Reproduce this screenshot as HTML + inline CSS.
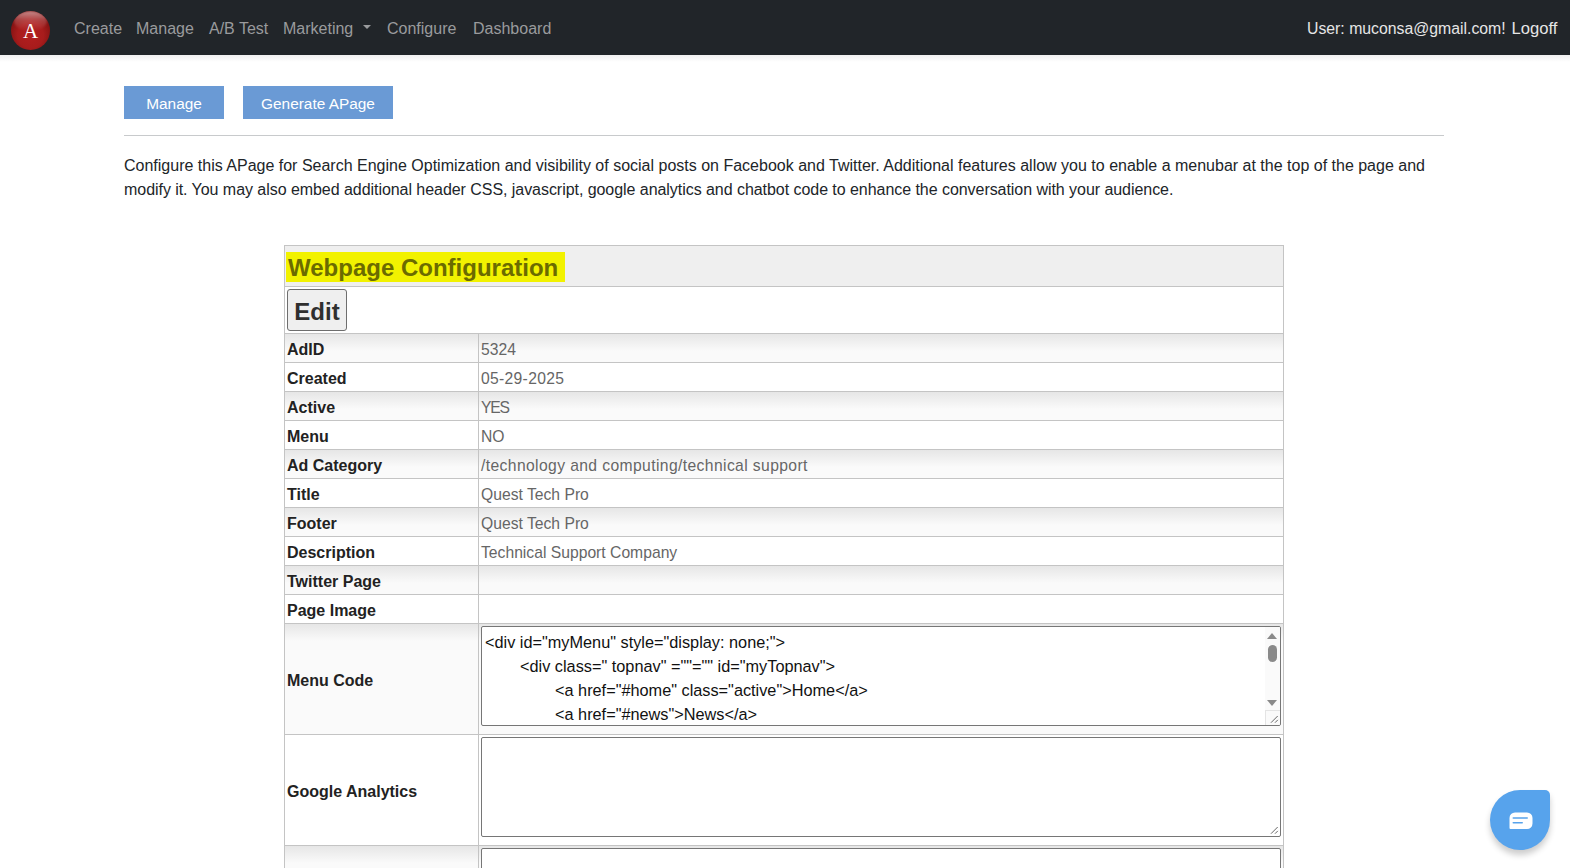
<!DOCTYPE html>
<html><head><meta charset="utf-8">
<style>
*{box-sizing:border-box;}
html,body{margin:0;padding:0;background:#fff;}
body{font-family:"Liberation Sans",sans-serif;color:#212529;width:1570px;height:868px;overflow:hidden;position:relative;}
.nav{position:absolute;left:0;top:0;width:1570px;height:55px;background:#212529;}
.navshadow{position:absolute;left:0;top:55px;width:1570px;height:7px;background:linear-gradient(#f0f0f0,#fff);}
.logo{position:absolute;left:11px;top:11px;width:39px;height:39px;border-radius:50%;
 background:radial-gradient(ellipse 60% 60% at 50% 62%,#b21e1e 0%,#a81c1c 55%,#8a1414 85%,#761010 100%);overflow:hidden;}
.logo:before{content:"";position:absolute;left:3px;top:0px;width:33px;height:20px;border-radius:50%;
 background:linear-gradient(rgba(255,225,225,.6) 0%,rgba(255,200,200,.25) 45%,rgba(255,255,255,0) 100%);filter:blur(1px);}
.logo span{position:absolute;left:0;top:10px;width:39px;text-align:center;font-family:"Liberation Serif",serif;font-size:21px;line-height:21px;color:#fff;}
.nl{position:absolute;top:19px;font-size:16px;line-height:20px;color:#9a9b9d;white-space:nowrap;}
.caret{position:absolute;left:363px;top:25px;width:0;height:0;border-left:4px solid transparent;border-right:4px solid transparent;border-top:4px solid #9a9b9d;}
.user{position:absolute;top:19px;font-size:16px;line-height:20px;color:#e6e6e6;white-space:nowrap;}
.btn{position:absolute;top:86px;height:33px;background:#6a9ad5;color:#fff;font-size:15.4px;line-height:33px;padding-top:1px;text-align:center;}
.hr{position:absolute;left:124px;top:135px;width:1320px;height:1px;background:#c8cacc;}
.para{position:absolute;left:124px;top:154px;width:1330px;font-size:16px;line-height:24px;color:#212529;}

.tbl{position:absolute;left:284px;top:245px;width:1000px;height:700px;}
.hb{position:absolute;left:0;width:1000px;height:1px;background:#c4c4c4;}
.vb{position:absolute;width:1px;background:#c4c4c4;}
.thead{position:absolute;left:1px;top:1px;width:998px;height:40px;background:#efefef;}
.hl{position:absolute;left:1px;top:6px;height:30px;background:#f2f200;color:#6b6b00;font-weight:bold;font-size:24px;line-height:30px;padding-top:1px;white-space:nowrap;padding-left:2px;}
.editbtn{position:absolute;left:3px;top:44px;width:60px;height:42px;border:1px solid #6e6e6e;border-radius:3px;background:#efefef;color:#2f2f2f;font-weight:bold;font-size:24px;line-height:38px;padding-top:3px;text-align:center;}
.row{position:absolute;left:1px;width:998px;}
.odd{background:linear-gradient(#e6e6e6 0px,#fafafa 17px,#fafafa 100%);}
.even{background:#fff;}
.lab{position:absolute;left:2px;top:2px;font-weight:bold;font-size:16px;line-height:28px;color:#222;white-space:nowrap;}
.tal{top:43px;}
.val{position:absolute;left:196px;top:2px;font-size:15.7px;line-height:28px;color:#666;white-space:nowrap;}
.ta{position:absolute;left:197px;width:800px;height:100px;border:1px solid #767676;border-radius:2px;background:#fff;overflow:hidden;}
.code{position:absolute;left:3px;top:2.5px;font-size:16.3px;line-height:24px;color:#111;white-space:nowrap;}
.sb{position:absolute;right:0;top:0;width:15px;height:83px;background:#fafafa;}
.up{position:absolute;left:2px;top:5.5px;width:0;height:0;border-left:5px solid transparent;border-right:5px solid transparent;border-bottom:6.5px solid #8a8a8a;}
.thumb{position:absolute;left:3px;top:18px;width:9px;height:17px;border-radius:4.5px;background:#8a8a8a;}
.dn{position:absolute;left:2px;top:72.5px;width:0;height:0;border-left:5px solid transparent;border-right:5px solid transparent;border-top:6.5px solid #8a8a8a;}
.corner{position:absolute;right:0;bottom:0;width:15px;height:15px;background:#fafafa;border-left:1px solid #e4e4e4;border-top:1px solid #e4e4e4;}
.rs{position:absolute;right:1px;bottom:1px;}

.chat{position:absolute;left:1490px;top:790px;width:60px;height:60px;background:#57a3ec;border-radius:30px 5px 30px 30px;box-shadow:0 5px 6px rgba(0,0,0,.2);}
</style></head><body>
<div class="nav">
 <div class="logo"><span>A</span></div>
 <div class="nl" style="left:74px">Create</div>
 <div class="nl" style="left:136px">Manage</div>
 <div class="nl" style="left:209px">A/B Test</div>
 <div class="nl" style="left:283px">Marketing</div>
 <div class="caret"></div>
 <div class="nl" style="left:387px">Configure</div>
 <div class="nl" style="left:473px">Dashboard</div>
 <div class="user" style="left:1307px;font-size:15.8px">User: muconsa@gmail.com!</div>
 <div class="user" style="left:1511.5px;font-size:16.6px">Logoff</div>
</div>
<div class="navshadow"></div>
<div class="btn" style="left:124px;width:100px">Manage</div>
<div class="btn" style="left:243px;width:150px">Generate APage</div>
<div class="hr"></div>
<div class="para">Configure this APage for Search Engine Optimization and visibility of social posts on Facebook and Twitter. Additional features allow you to enable a menubar at the top of the page and<br><span style="letter-spacing:-0.05px">modify it. You may also embed additional header CSS, javascript, google analytics and chatbot code to enhance the conversation with your audience.</span></div>
<div class="tbl">
<div class="thead"><span class="hl">Webpage Configuration&nbsp;</span></div>
<div class="hb" style="top:0px"></div><div class="hb" style="top:41px"></div>
<div class="editbtn">Edit</div>
<div class="hb" style="top:88px"></div>
<div class="row odd" style="top:89px;height:28px"><div class="lab">AdID</div><div class="val">5324</div></div>
<div class="hb" style="top:117px"></div>
<div class="row even" style="top:118px;height:28px"><div class="lab">Created</div><div class="val" style="letter-spacing:0.3px">05-29-2025</div></div>
<div class="hb" style="top:146px"></div>
<div class="row odd" style="top:147px;height:28px"><div class="lab">Active</div><div class="val" style="letter-spacing:-1.2px">YES</div></div>
<div class="hb" style="top:175px"></div>
<div class="row even" style="top:176px;height:28px"><div class="lab">Menu</div><div class="val">NO</div></div>
<div class="hb" style="top:204px"></div>
<div class="row odd" style="top:205px;height:28px"><div class="lab">Ad Category</div><div class="val" style="letter-spacing:0.38px">/technology and computing/technical support</div></div>
<div class="hb" style="top:233px"></div>
<div class="row even" style="top:234px;height:28px"><div class="lab">Title</div><div class="val">Quest Tech Pro</div></div>
<div class="hb" style="top:262px"></div>
<div class="row odd" style="top:263px;height:28px"><div class="lab">Footer</div><div class="val">Quest Tech Pro</div></div>
<div class="hb" style="top:291px"></div>
<div class="row even" style="top:292px;height:28px"><div class="lab">Description</div><div class="val">Technical Support Company</div></div>
<div class="hb" style="top:320px"></div>
<div class="row odd" style="top:321px;height:28px"><div class="lab">Twitter Page</div><div class="val"></div></div>
<div class="hb" style="top:349px"></div>
<div class="row even" style="top:350px;height:28px"><div class="lab">Page Image</div><div class="val"></div></div>
<div class="hb" style="top:378px"></div>
<div class="row odd" style="top:379px;height:110px"><div class="lab tal">Menu Code</div></div>
<div class="ta" style="top:381px"><div class="code"><div>&lt;div id="myMenu" style="display: none;"&gt;</div><div style="padding-left:35px">&lt;div class=" topnav" =""="" id="myTopnav"&gt;</div><div style="padding-left:70px">&lt;a href="#home" class="active"&gt;Home&lt;/a&gt;</div><div style="padding-left:70px">&lt;a href="#news"&gt;News&lt;/a&gt;</div></div><div class="sb"><div class="up"></div><div class="thumb"></div><div class="dn"></div></div><div class="corner"></div><svg class="rs" width="10" height="10" viewBox="0 0 10 10"><path d="M2 8.7 L8.7 2 M6 8.7 L8.8 5.9" stroke="#666" stroke-width="1" fill="none"/></svg></div>
<div class="hb" style="top:489px"></div>
<div class="row even" style="top:490px;height:110px"><div class="lab tal">Google Analytics</div></div>
<div class="ta" style="top:492px"><svg class="rs" width="10" height="10" viewBox="0 0 10 10"><path d="M2 8.7 L8.7 2 M6 8.7 L8.8 5.9" stroke="#666" stroke-width="1" fill="none"/></svg></div>
<div class="hb" style="top:600px"></div>
<div class="row odd" style="top:601px;height:110px"><div class="lab tal"></div></div>
<div class="ta" style="top:603px"><svg class="rs" width="10" height="10" viewBox="0 0 10 10"><path d="M2 8.7 L8.7 2 M6 8.7 L8.8 5.9" stroke="#666" stroke-width="1" fill="none"/></svg></div>
<div class="hb" style="top:711px"></div>
<div class="vb" style="top:0;left:0;height:700px"></div>
<div class="vb" style="top:0;left:999px;height:700px"></div>
<div class="vb" style="top:89px;left:194px;height:700px"></div>
</div>
<div class="chat"><svg width="24" height="18" viewBox="0 0 24 18" style="position:absolute;left:19px;top:22px"><path d="M6 0.5 H18 A5.5 5.5 0 0 1 23.5 6 V11.5 A5.5 5.5 0 0 1 18 17 H1.5 A1 1 0 0 1 0.5 16 V6 A5.5 5.5 0 0 1 6 0.5 Z" fill="#fff"/><path d="M4.3 6 H18.2 M4.3 10.8 H13.2" stroke="#57a3ec" stroke-width="1.6" stroke-linecap="round"/></svg></div>
</body></html>
